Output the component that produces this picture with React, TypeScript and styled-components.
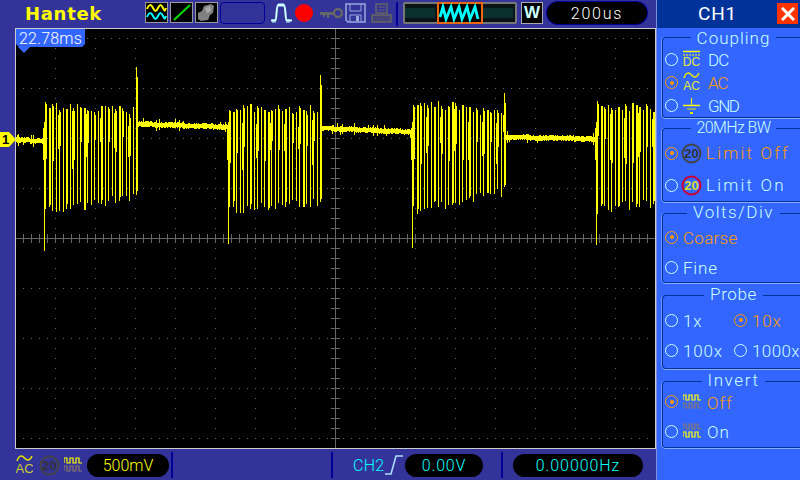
import React from "react";
import styled, { createGlobalStyle } from "styled-components";

const MAIN = "#333399";
const PANEL = "#3366ff";
const PALE = "#ccffff";
const ORANGE = "#ff9900";
const YELLOW = "#ffff00";
const CYAN = "#00ffff";
const SANS = '"Liberation Sans", Arial, sans-serif';
const THIN = 'Roboto, "Liberation Sans", Arial, sans-serif';

const Global = createGlobalStyle`
  html, body {
    margin: 0;
    padding: 0;
    background: ${MAIN};
    overflow: hidden;
  }
`;

const Screen = styled.div`
  width: 800px;
  height: 480px;
  display: flex;
  overflow: hidden;
  background: ${MAIN};
  font-family: ${THIN};
  font-weight: 300;
  font-size: 17px;
`;

const MainColumn = styled.div`
  width: 656px;
  flex: none;
  display: flex;
  flex-direction: column;
`;

const TopBar = styled.div`
  height: 28px;
  display: flex;
  align-items: center;
`;

const Logo = styled.div`
  width: 145px;
  padding-left: 25px;
  box-sizing: border-box;
  font-family: "DejaVu Sans", sans-serif;
  font-weight: 700;
  font-size: 18px;
  letter-spacing: 0.7px;
  color: ${YELLOW};
  margin-top: -1px;
`;

const IconBox = styled.div<{ $ml?: number }>`
  width: 23px;
  height: 21px;
  margin-left: ${(p) => p.$ml ?? 2}px;
  margin-top: -3px;
  box-sizing: border-box;
  border: 1px solid #999999;
  background: #000;
  display: flex;
`;

const EmptySlot = styled.div`
  width: 45px;
  height: 22px;
  margin-left: 2px;
  margin-top: -3px;
  box-sizing: border-box;
  border: 1px solid #000099;
  border-radius: 4px;
`;

const ToolIcon = styled.svg<{ $ml: number }>`
  margin-left: ${(p) => p.$ml}px;
  margin-top: -3px;
  flex: none;
`;

const VBar = styled.div<{ $ml: number; $h?: number }>`
  width: 2px;
  height: ${(p) => p.$h ?? 24}px;
  margin-left: ${(p) => p.$ml}px;
  background: #000099;
  flex: none;
`;

const WButton = styled.div`
  width: 22px;
  height: 22px;
  margin-left: 4px;
  margin-top: -3px;
  box-sizing: border-box;
  border: 1px solid #aaaaaa;
  background: #000;
  color: ${PALE};
  font-family: ${SANS};
  font-weight: 700;
  font-size: 17px;
  line-height: 20px;
  text-align: center;
`;

const Pill = styled.div<{ $w: number; $ml: number; $color: string; $spacing: number; $edge?: boolean }>`
  width: ${(p) => p.$w}px;
  height: 23px;
  margin-left: ${(p) => p.$ml}px;
  flex: none;
  background: #000;
  border-radius: 12px;
  color: ${(p) => p.$color};
  font-size: 16px;
  letter-spacing: ${(p) => p.$spacing}px;
  line-height: 24px;
  text-align: center;
  box-shadow: ${(p) => (p.$edge ? "0 0 0 1px #000099" : "none")};
`;

const TimePill = styled(Pill)`
  margin-top: -3px;
  height: 22px;
  line-height: 23px;
`;

const Middle = styled.div`
  position: relative;
  display: flex;
  height: 421px;
`;

const Rail = styled.div`
  width: 15px;
  flex: none;
`;

const Plot = styled.div`
  position: relative;
  width: 641px;
  height: 421px;
  box-sizing: border-box;
  border: 1px solid #cccccc;
  background: #000;
`;

const Scope = styled.svg`
  display: block;
`;

const TimeFlag = styled.div`
  position: absolute;
  left: 0;
  top: 0;
  width: 69px;
  height: 18px;
  background: ${PANEL};
  color: #ffffff;
  font-size: 16px;
  line-height: 19px;
  letter-spacing: 0.2px;
  text-align: center;
  clip-path: polygon(0 0, 100% 0, 100% 15px, 66px 100%, 3px 100%, 0 15px);
`;

const TimeFlagTip = styled.div`
  position: absolute;
  left: 2px;
  top: 18px;
  width: 0;
  height: 0;
  border-left: 6px solid transparent;
  border-right: 6px solid transparent;
  border-top: 6px solid ${PANEL};
`;

const ChannelFlag = styled.div`
  position: absolute;
  left: 0;
  top: 104px;
  width: 16px;
  height: 15px;
  padding-left: 2px;
  box-sizing: border-box;
  background: ${YELLOW};
  color: #000;
  font-family: ${SANS};
  font-weight: 700;
  font-size: 13px;
  line-height: 15px;
  clip-path: polygon(0 0, 9px 0, 100% 50%, 9px 100%, 0 100%);
`;

const BottomBar = styled.div`
  flex: 1;
  display: flex;
  align-items: center;
  padding-left: 16px;
  padding-top: 1px;
`;

const SmallIcon = styled.svg<{ $ml?: number }>`
  margin-left: ${(p) => p.$ml ?? 0}px;
  flex: none;
`;

const ChannelName = styled.div`
  margin-left: 20px;
  color: ${CYAN};
  font-size: 16px;
  letter-spacing: 0.3px;
  width: 31px;
`;

const SidePanel = styled.div`
  width: 143px;
  flex: none;
  background: ${PANEL};
  border-left: 1px solid #7f8fe0;
  color: ${PALE};
  overflow: hidden;
`;

const PanelHeader = styled.div`
  position: relative;
  height: 28px;
  background: #003399;
  color: #ffffff;
  font-size: 19px;
  font-weight: 400;
  line-height: 28px;
  padding-left: 41px;
  letter-spacing: 0.8px;
`;

const CloseButton = styled.div`
  position: absolute;
  right: 2px;
  top: 3px;
  width: 21px;
  height: 21px;
  background: #ff3300;
  display: flex;
  align-items: center;
  justify-content: center;
`;

const Group = styled.fieldset<{ $top: number; $height: number }>`
  margin: ${(p) => p.$top}px 0 0 5px;
  padding: 0;
  min-inline-size: 0;
  width: 142px;
  height: ${(p) => p.$height}px;
  box-sizing: border-box;
  border: 1px solid #003399;
  border-right: none;
  border-radius: 4px 0 0 4px;
  box-shadow: 0 1px 0 #88aaff, -1px 0 0 #6f94ff;
`;

const Legend = styled.legend<{ $spacing: number; $lh?: number; $size?: number }>`
  margin: 0 auto;
  padding: 0 6px;
  font-size: ${(p) => p.$size ?? 17}px;
  line-height: ${(p) => p.$lh ?? 17}px;
  height: 18px;
  letter-spacing: ${(p) => p.$spacing}px;
`;

const Row = styled.div<{ $h: number; $first?: number }>`
  height: ${(p) => p.$h}px;
  margin-top: ${(p) => p.$first ?? 0}px;
  display: flex;
  align-items: center;
  padding-left: 2px;
`;

const Cell = styled.div<{ $w: number }>`
  width: ${(p) => p.$w}px;
  flex: none;
  display: flex;
  align-items: center;
`;

const Radio = styled.div<{ $on?: boolean }>`
  width: 13px;
  height: 13px;
  flex: none;
  box-sizing: border-box;
  border: 1.5px solid ${(p) => (p.$on ? ORANGE : PALE)};
  border-radius: 50%;
  display: flex;
  align-items: center;
  justify-content: center;

  &::after {
    content: "";
    display: ${(p) => (p.$on ? "block" : "none")};
    width: 4px;
    height: 4px;
    border-radius: 50%;
    background: ${ORANGE};
  }
`;

const RowIcon = styled.svg<{ $ml: number }>`
  margin-left: ${(p) => p.$ml}px;
  flex: none;
`;

const Label = styled.span<{ $on?: boolean; $ml?: number; $spacing?: number; $pt?: number }>`
  margin-left: ${(p) => p.$ml ?? 5}px;
  padding-top: ${(p) => p.$pt ?? 2}px;
  color: ${(p) => (p.$on ? ORANGE : PALE)};
  letter-spacing: ${(p) => p.$spacing ?? 0.8}px;
  white-space: nowrap;
`;

// seeded noise so the trace is the same on every load
let seed = 73;
const rnd = () => {
  seed = (seed * 16807) % 2147483647;
  return seed / 2147483647;
};

const buildTrace = () => {
  const segs: string[] = [];
  const seg = (x: number, a: number, b: number) => segs.push(`M${x + 0.5} ${a}V${b}`);

  const baseline = (from: number, to: number, a: number, b: number) => {
    for (let x = from; x < to; x++) {
      const mid = a + ((b - a) * (x - from)) / (to - from);
      const spike = rnd() > 0.85 ? 3 : 0;
      const up = 2 + Math.floor(rnd() * 2) + (rnd() > 0.5 ? spike : 0);
      const down = 2 + Math.floor(rnd() * 2) + (rnd() > 0.5 ? spike : 0);
      seg(x, Math.round(mid - up), Math.round(mid + down));
    }
  };

  const burst = (
    start: number,
    end: number,
    low: [number, number],
    top: [number, number],
    spikeDown: number,
    spikeUp: number | null,
  ) => {
    // entry spike
    seg(start, 122, spikeDown);
    seg(start - 1, 128, 160);
    const n = Math.floor((end - start) / 3.5);
    for (let i = 0; i <= n; i++) {
      const x = Math.round(start + 1 + i * 3.5);
      const f = i / n;
      const topY = top[0] + (top[1] - top[0]) * f + rnd() * 9;
      const lowY = low[0] + (low[1] - low[0]) * f - rnd() * 10;
      seg(x, Math.round(topY), Math.round(lowY));
      // every other bar is two pixels wide, part or all of the way down
      if (i % 2 === 0) {
        seg(x + 1, Math.round(topY + rnd() * 4), Math.round(135 + rnd() * 30));
      }
      if (i % 5 === 1) {
        seg(x + 1, Math.round(topY), Math.round(lowY - rnd() * 6));
      }
      if (i % 4 === 3) {
        seg(x + 2, Math.round(topY + 6 + rnd() * 10), Math.round(140 + rnd() * 30));
      }
    }
    if (spikeUp !== null) {
      seg(end, spikeUp, 124);
      seg(end + 1, spikeUp + 10, 122);
    }
  };

  baseline(16, 44, 140, 141);
  burst(44, 136, [216, 202], [101, 106], 251, 67);
  baseline(138, 228, 124, 127);
  burst(228, 320, [215, 207], [103, 104], 244, 75);
  baseline(322, 412, 128, 132);
  burst(412, 504, [215, 197], [97, 109], 248, 93);
  seg(503, 115, 132);
  seg(504, 115, 132);
  baseline(506, 596, 137, 139);
  burst(596, 652, [214, 208], [101, 103], 245, null);
  return segs.join("");
};

const range = (from: number, to: number, step: number) => {
  const out: number[] = [];
  for (let v = from; v <= to; v += step) out.push(v);
  return out;
};

const traceD = buildTrace();
const rowsY = range(38, 438, 50);
const colsX = range(55, 655, 40);
const dotXs = range(23, 654, 8);
const dotYs = range(38, 448, 10);

const dotsD =
  rowsY.map((y) => dotXs.map((x) => `M${x} ${y}h1v1h-1z`).join("")).join("") +
  colsX.map((x) => dotYs.map((y) => `M${x} ${y}h1v1h-1z`).join("")).join("");

const axisD =
  "M16 238.5H655M335.5 29V448" +
  dotXs.map((x) => `M${x + 0.5} 234V243`).join("") +
  dotYs.map((y) => `M331 ${y + 0.5}H340`).join("");

const overviewWave = range(0, 4, 1)
  .map((i) => {
    const x = 37 + i * 8;
    return `${i === 0 ? "M" + x + " 15" : ""}L${x + 3} 5 L${x + 6} 17`;
  })
  .join("");

const ScopeGrid = () => (
  <Scope width={639} height={419} viewBox="16 29 639 419" shapeRendering="crispEdges">
    <path d={dotsD} fill="#666666" />
    <path d={axisD} stroke="#666666" fill="none" />
    <path d={traceD} stroke={YELLOW} fill="none" />
  </Scope>
);

const sw = (n: number, x: number, y: number, w: number, h: number) => {
  let d = `M${x} ${y + h}`;
  for (let i = 0; i < n; i++) d += `v${-h}h${w}v${h}h${w}`;
  return d;
};

const AcIcon = () => (
  <SmallIcon width={17} height={25} viewBox="0 0 17 25">
    <path d="M1 8C3 2 6 2 8.5 5S14 8 16 3" stroke="#e6e600" strokeWidth="1.4" fill="none" />
    <text x="8.5" y="20" textAnchor="middle" fontFamily={SANS} fontSize="13" fontWeight="400" fill="#cccc33">
      AC
    </text>
  </SmallIcon>
);

const BwIcon = ({ off, ml }: { off?: boolean; ml: number }) => (
  <SmallIcon $ml={ml} width={21} height={21} viewBox="0 0 21 21">
    <circle cx="10.5" cy="10.5" r="9" fill="none" stroke={off ? "#444444" : "#cc0033"} strokeWidth="2" />
    <text
      x="10.5"
      y="15"
      textAnchor="middle"
      fontFamily={SANS}
      fontSize="13"
      fontWeight="700"
      fill={off ? "#333333" : "#dddd33"}
    >
      20
    </text>
  </SmallIcon>
);

const InvertIcon = ({ flipped }: { flipped?: boolean }) => (
  <RowIcon $ml={5} width={18} height={16} viewBox="0 0 18 16">
    <path d={sw(3, 0, 1, 3, 5)} stroke={flipped ? "#887766" : YELLOW} strokeWidth="1.2" fill="none" />
    <path d={sw(3, 0, 9, 3, 5)} stroke={flipped ? YELLOW : "#887766"} strokeWidth="1.2" fill="none" />
  </RowIcon>
);

function AcIconRow() {
  return (
    <RowIcon $ml={4} width={19} height={22} viewBox="0 0 19 22">
      <path d="M2 6C4 0 7 0 9.5 3S15 6 17 1" stroke="#e6e600" strokeWidth="1.4" fill="none" />
      <text x="9.5" y="18" textAnchor="middle" fontFamily={SANS} fontSize="12" fontWeight="400" fill="#e6e633">
        AC
      </text>
    </RowIcon>
  );
}

const App: React.FC = () => {
  return (
    <Screen>
      <Global />
      <MainColumn>
        <TopBar>
          <Logo>Hantek</Logo>
          <IconBox $ml={0}>
            <svg width={21} height={19} viewBox="0 0 21 19">
              <path d="M1 6C3 1 5 1 7 5S10 9 12 5 15 1 17 5 19 8 20 5" stroke={YELLOW} strokeWidth="2" fill="none" />
              <path d="M1 14C3 9 5 9 7 13S10 17 12 13 15 9 17 13 19 16 20 13" stroke={CYAN} strokeWidth="2" fill="none" />
            </svg>
          </IconBox>
          <IconBox>
            <svg width={21} height={19} viewBox="0 0 21 19">
              <path d="M3 17L19 2" stroke="#00dd00" strokeWidth="2" fill="none" />
            </svg>
          </IconBox>
          <IconBox>
            <svg width={21} height={19} viewBox="0 0 21 19">
              <path d="M2 16V10L6 8 8 3 15 1 18 3 17 10 14 12 12 17 5 18Z" fill="#808080" />
              <path d="M9 5L14 3 15 8 11 10Z" fill="#aaaaaa" />
            </svg>
          </IconBox>
          <EmptySlot />
          <ToolIcon $ml={6} width={21} height={20} viewBox="0 0 21 20">
            <path
              d="M0 17.5H4.5C5.5 17.5 5.5 2 7 2H13C14.5 2 14.5 17.5 15.5 17.5H21"
              stroke="#ccffff"
              strokeWidth="2"
              fill="none"
            />
            <path d="M8 0V4M10 0V4M12 0V4M2 16V20M4 16V20M16 16V20M18 16V20" stroke="#ccffff" fill="none" />
          </ToolIcon>
          <ToolIcon $ml={3} width={18} height={18} viewBox="0 0 18 18">
            <circle cx="9" cy="9" r="9" fill="#ff0000" />
          </ToolIcon>
          <ToolIcon $ml={7} width={23} height={14} viewBox="0 0 23 14">
            <circle cx="18" cy="7" r="4" fill="none" stroke="#666666" strokeWidth="2.5" />
            <path d="M0 6H14V9H9V12H7V9H5V11H3V9H0Z" fill="#666666" />
          </ToolIcon>
          <ToolIcon $ml={2} width={21} height={20} viewBox="0 0 21 20">
            <path d="M1 1H20V19H3L1 17Z" fill="none" stroke="#99aadd" strokeWidth="1.5" />
            <path d="M5 1V8H16V1" fill="none" stroke="#99aadd" />
            <path d="M5 19V12H16V19" fill="none" stroke="#99aadd" />
            <rect x="11" y="13" width="3" height="5" fill="#99aadd" />
          </ToolIcon>
          <ToolIcon $ml={5} width={21} height={20} viewBox="0 0 21 20">
            <path d="M5 1H16V10H5Z" fill="none" stroke="#666666" strokeWidth="1.5" />
            <path d="M7 4H14M7 7H14" stroke="#666666" />
            <path d="M1 12H20V19H1Z" fill="#444477" stroke="#666666" strokeWidth="1.5" />
          </ToolIcon>
          <VBar $ml={4} />
          <ToolIcon $ml={5} width={114} height={22} viewBox="0 0 114 22">
            <rect width="114" height="22" rx="2" fill="#777777" />
            <rect x="2" y="2" width="110" height="18" fill="#0a1414" />
            <path
              d={range(3, 32, 2).map((x) => `M${x} 6V16`).join("") + range(81, 110, 2).map((x) => `M${x} 6V16`).join("")}
              stroke="#0a4c4c"
              fill="none"
            />
            <rect x="35" y="1" width="44" height="20" fill="#000" stroke="#ee6611" strokeWidth="2" />
            <path d={overviewWave} stroke={CYAN} strokeWidth="2.8" fill="none" />
          </ToolIcon>
          <WButton>W</WButton>
          <TimePill $w={100} $ml={4} $color="#ffffff" $spacing={1.8} $edge>
            200us
          </TimePill>
        </TopBar>

        <Middle>
          <Rail />
          <Plot>
            <ScopeGrid />
            <TimeFlag>22.78ms</TimeFlag>
            <TimeFlagTip />
          </Plot>
          <ChannelFlag>1</ChannelFlag>
        </Middle>

        <BottomBar>
          <AcIcon />
          <BwIcon off ml={6} />
          <SmallIcon $ml={4} width={18} height={16} viewBox="0 0 18 16">
            <path d={sw(3, 0, 1, 3, 5)} stroke={YELLOW} strokeWidth="1.2" fill="none" />
            <path d={sw(3, 0, 9, 3, 5)} stroke="#887766" strokeWidth="1.2" fill="none" />
          </SmallIcon>
          <Pill $w={82} $ml={5} $color={YELLOW} $spacing={0}>
            500mV
          </Pill>
          <VBar $ml={2} $h={26} />
          <VBar $ml={158} $h={26} />
          <ChannelName>CH2</ChannelName>
          <SmallIcon $ml={1} width={18} height={20} viewBox="0 0 18 20">
            <path d="M0 19H6L11 1H18" stroke="#aaddff" strokeWidth="1.6" fill="none" />
          </SmallIcon>
          <Pill $w={78} $ml={2} $color={CYAN} $spacing={0.8}>
            0.00V
          </Pill>
          <VBar $ml={18} $h={26} />
          <Pill $w={130} $ml={10} $color={CYAN} $spacing={0.9}>
            0.00000Hz
          </Pill>
        </BottomBar>
      </MainColumn>

      <SidePanel>
        <PanelHeader>
          CH1
          <CloseButton>
            <svg width={14} height={14} viewBox="0 0 14 14">
              <path d="M1 1L13 13M13 1L1 13" stroke="#ffffff" strokeWidth="3" fill="none" />
            </svg>
          </CloseButton>
        </PanelHeader>

        <Group $top={0} $height={90}>
          <Legend $spacing={1} $lh={20}>
            Coupling
          </Legend>
          <Row $h={23} $first={2}>
            <Radio />
            <RowIcon $ml={4} width={19} height={21} viewBox="0 0 19 21">
              <path d="M1 2.5H18" stroke={YELLOW} strokeWidth="1.5" />
              <path d="M1 6H18" stroke={YELLOW} strokeDasharray="2 1" />
              <text x="9.5" y="17" textAnchor="middle" fontFamily={SANS} fontSize="12" fontWeight="400" fill="#e6e633">
                DC
              </text>
            </RowIcon>
            <Label $ml={7} $pt={0} $spacing={-1}>
              DC
            </Label>
          </Row>
          <Row $h={23}>
            <Radio $on />
            <AcIconRow />
            <Label $on $ml={7} $pt={0} $spacing={-1}>
              AC
            </Label>
          </Row>
          <Row $h={23}>
            <Radio />
            <RowIcon $ml={4} width={19} height={18} viewBox="0 0 19 18">
              <path d="M1 8.5H18" stroke={YELLOW} strokeWidth="1.5" />
              <path d="M9.5 1V8M5 12H14" stroke="#e6e600" strokeWidth="1.2" />
              <path d="M8 15H11V17H8Z" fill="#e6e600" />
            </RowIcon>
            <Label $ml={7} $pt={0} $spacing={-1.5}>
              GND
            </Label>
          </Row>
        </Group>

        <Group $top={1} $height={83}>
          <Legend $spacing={-0.6} $size={16}>
            20MHz BW
          </Legend>
          <Row $h={32}>
            <Radio $on />
            <BwIcon off ml={3} />
            <Label $on $ml={4} $pt={0} $spacing={2.2}>
              Limit Off
            </Label>
          </Row>
          <Row $h={32}>
            <Radio />
            <BwIcon ml={3} />
            <Label $ml={4} $pt={0} $spacing={2.2}>
              Limit On
            </Label>
          </Row>
        </Group>

        <Group $top={2} $height={79}>
          <Legend $spacing={1.5}>Volts/Div</Legend>
          <Row $h={30}>
            <Radio $on />
            <Label $on $spacing={0.3}>
              Coarse
            </Label>
          </Row>
          <Row $h={30}>
            <Radio />
            <Label>Fine</Label>
          </Row>
        </Group>

        <Group $top={3} $height={83}>
          <Legend $spacing={0.6}>Probe</Legend>
          <Row $h={30} $first={1}>
            <Cell $w={69}>
              <Radio />
              <Label>1x</Label>
            </Cell>
            <Cell $w={70}>
              <Radio $on />
              <Label $on>10x</Label>
            </Cell>
          </Row>
          <Row $h={30}>
            <Cell $w={69}>
              <Radio />
              <Label>100x</Label>
            </Cell>
            <Cell $w={70}>
              <Radio />
              <Label $spacing={0.4}>1000x</Label>
            </Cell>
          </Row>
        </Group>

        <Group $top={3} $height={76}>
          <Legend $spacing={1.6}>Invert</Legend>
          <Row $h={29} $first={-3}>
            <Radio $on />
            <InvertIcon />
            <Label $on $ml={6} $spacing={1}>
              Off
            </Label>
          </Row>
          <Row $h={30}>
            <Radio />
            <InvertIcon flipped />
            <Label $ml={6} $spacing={1}>
              On
            </Label>
          </Row>
        </Group>
      </SidePanel>
    </Screen>
  );
};

export default App;
